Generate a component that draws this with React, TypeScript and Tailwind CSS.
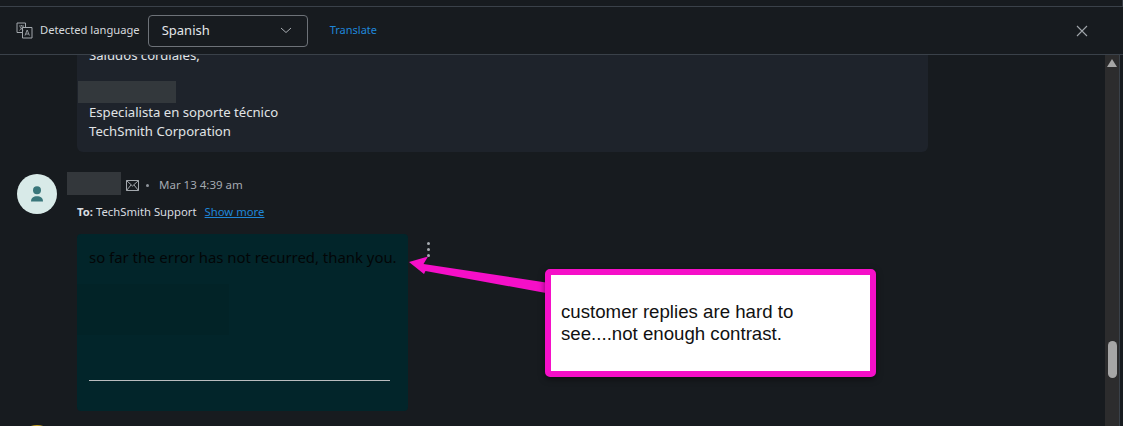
import React from "react";

const font = { fontFamily: '"Noto Sans", sans-serif' };

function TranslateIcon() {
  return (
    <svg width="17" height="17" viewBox="0 0 17 17" fill="none" stroke="#a3a8ad" strokeWidth="1">
      <path d="M6.5 10.5H1V1h8.5v4" />
      <path d="M6.5 5.5h9.5v10.5H6.5z" />
      <path d="M3 4h5M5.5 3v1M3.5 8.5 7 4.5M4 5l3 3.5" strokeWidth="0.8" />
      <path d="M9 13.5l2.2-5.5 2.2 5.5M9.8 12h2.8" strokeWidth="0.9" />
    </svg>
  );
}

export default function App() {
  return (
    <div className="relative flex h-[426px] w-[1123px] flex-col overflow-hidden bg-[#171b1f] text-[#dfe3e6]" style={font}>
      <div className="h-[6px] shrink-0 border-r border-[#323840]" />
      <header className="flex h-[49px] shrink-0 items-center border-y border-[#3a4149] bg-[#171b1f] pl-[16px] pr-[35px]">
        <TranslateIcon />
        <span className="ml-[7px] text-[11.2px] text-[#d5d9dd]">Detected language</span>
        <div className="ml-[8px] flex h-[32px] w-[160px] items-center justify-between rounded-[4px] border border-[#6d7278] pl-[13px] pr-[15px] text-[13px] text-[#e4e7ea]">
          <span>Spanish</span>
          <svg width="12" height="7" viewBox="0 0 12 7" fill="none" stroke="#a8adb2" strokeWidth="1">
            <path d="M1 1l5 4.5L11 1" />
          </svg>
        </div>
        <button className="ml-[22px] text-[11px] text-[#1f86d8]">Translate</button>
        <svg className="ml-auto" width="12" height="12" viewBox="0 0 12 12" stroke="#a0a5aa" strokeWidth="1.1" fill="none">
          <path d="M1 1l10 10M11 1L1 11" />
        </svg>
      </header>

      <div className="flex min-h-0 flex-1">
        <main className="min-w-0 flex-1 overflow-hidden">
          <div className="ml-[77px] mt-[-21px] h-[118px] w-[851px] rounded-[6px] bg-[#1e232b] px-[12px] pt-[12px] text-[13.15px] leading-[19px] text-[#e0e3e6]">
            <p>Saludos cordiales,</p>
            <div className="ml-[-11px] mt-[16px] h-[22px] w-[98px] bg-[#33383c]" />
            <p>Especialista en soporte técnico</p>
            <p>TechSmith Corporation</p>
          </div>

          <section className="mt-[22px] flex pl-[17px]">
            <div className="flex h-[40px] w-[40px] shrink-0 items-center justify-center rounded-full bg-[#d8eae8]">
              <svg width="14" height="16" viewBox="0 0 14 16" fill="#39767a">
                <circle cx="7" cy="4.2" r="4" />
                <path d="M1 15.5c0-3.6 2.5-5.2 6-5.2s6 1.6 6 5.2z" />
              </svg>
            </div>
            <div className="ml-[20px] min-w-0">
              <div className="flex h-[22px] items-center text-[11.5px] text-[#a4aab1]">
                <div className="ml-[-10px] mt-[-4px] h-[23px] w-[54px] bg-[#33373b]" />
                <svg className="ml-[5px]" width="13" height="11" viewBox="0 0 13 11" fill="none" stroke="#a4a9ae" strokeWidth="1">
                  <path d="M.5.5h12v10H.5zM.5.5l6 5.5 6-5.5M.5 10.5 5 5M12.5 10.5 8 5" />
                </svg>
                <span className="ml-[7px] h-[3px] w-[3px] rounded-full bg-[#8f959c]" />
                <span className="ml-[10px]">Mar 13 4:39 am</span>
              </div>
              <div className="mt-[7px] flex h-[18px] items-center text-[11.3px] text-[#d9dde0]">
                <strong className="font-bold">To:</strong>
                <span className="ml-[3px]">TechSmith Support</span>
                <a className="ml-[8px] text-[#1f86d8] underline">Show more</a>
              </div>
            </div>
          </section>

          <div className="ml-[77px] mt-[13px] flex items-start">
            <div className="h-[177px] w-[331px] rounded-[4px] bg-[#02252a] px-[12px] pt-[12px] text-[14.9px] leading-[22px] text-[#030607]">
              <p className="whitespace-nowrap">so far the error has not recurred, thank you.</p>
              <div className="ml-[-12px] mt-[16px] h-[51px] w-[152px] bg-[#022327]" />
              <div className="mt-[45px] h-px w-[301px] bg-[#b9bcbe]" />
            </div>
            <div className="ml-[19px] mt-[8px] flex flex-col gap-[3px]">
              <span className="h-[3px] w-[3px] rounded-full bg-[#a6abb0]" />
              <span className="h-[3px] w-[3px] rounded-full bg-[#a6abb0]" />
              <span className="h-[3px] w-[3px] rounded-full bg-[#a6abb0]" />
            </div>
          </div>

          <div className="ml-[17px] mt-[14px] h-[40px] w-[40px] rounded-full bg-[#c9a227]" />
        </main>

        <aside className="relative w-[14px] shrink-0 bg-[#2c2c2d]">
          <svg className="ml-[2px] mt-[4px]" width="10" height="8" viewBox="0 0 10 8" fill="#a6a6a6">
            <path d="M5 0l5 8H0z" />
          </svg>
          <div className="absolute left-[3px] top-[286px] h-[37px] w-[9px] rounded-full bg-[#a6a6a6]" />
        </aside>
        <div className="w-[4px] shrink-0 border-l border-[#3a4149]" />
      </div>

      <svg className="absolute left-[408px] top-[255px]" width="145" height="50" viewBox="0 0 145 50" fill="#f50fc8">
        <path d="M1 7 20 1.5 15.5 9 138 27.5 138 38 17.5 16 16 19z" />
      </svg>

      <div className="absolute left-[545px] top-[269px] flex h-[108px] w-[331px] items-center rounded-[5px] border-[6px] border-[#f50fc8] bg-white pl-[10px] text-[18.67px] leading-[22px] text-[#111] shadow-[0_2px_6px_rgba(0,0,0,0.5)]" style={{ fontFamily: '"Liberation Sans", sans-serif' }}>
        <p>customer replies are hard to<br />see....not enough contrast.</p>
      </div>
    </div>
  );
}
